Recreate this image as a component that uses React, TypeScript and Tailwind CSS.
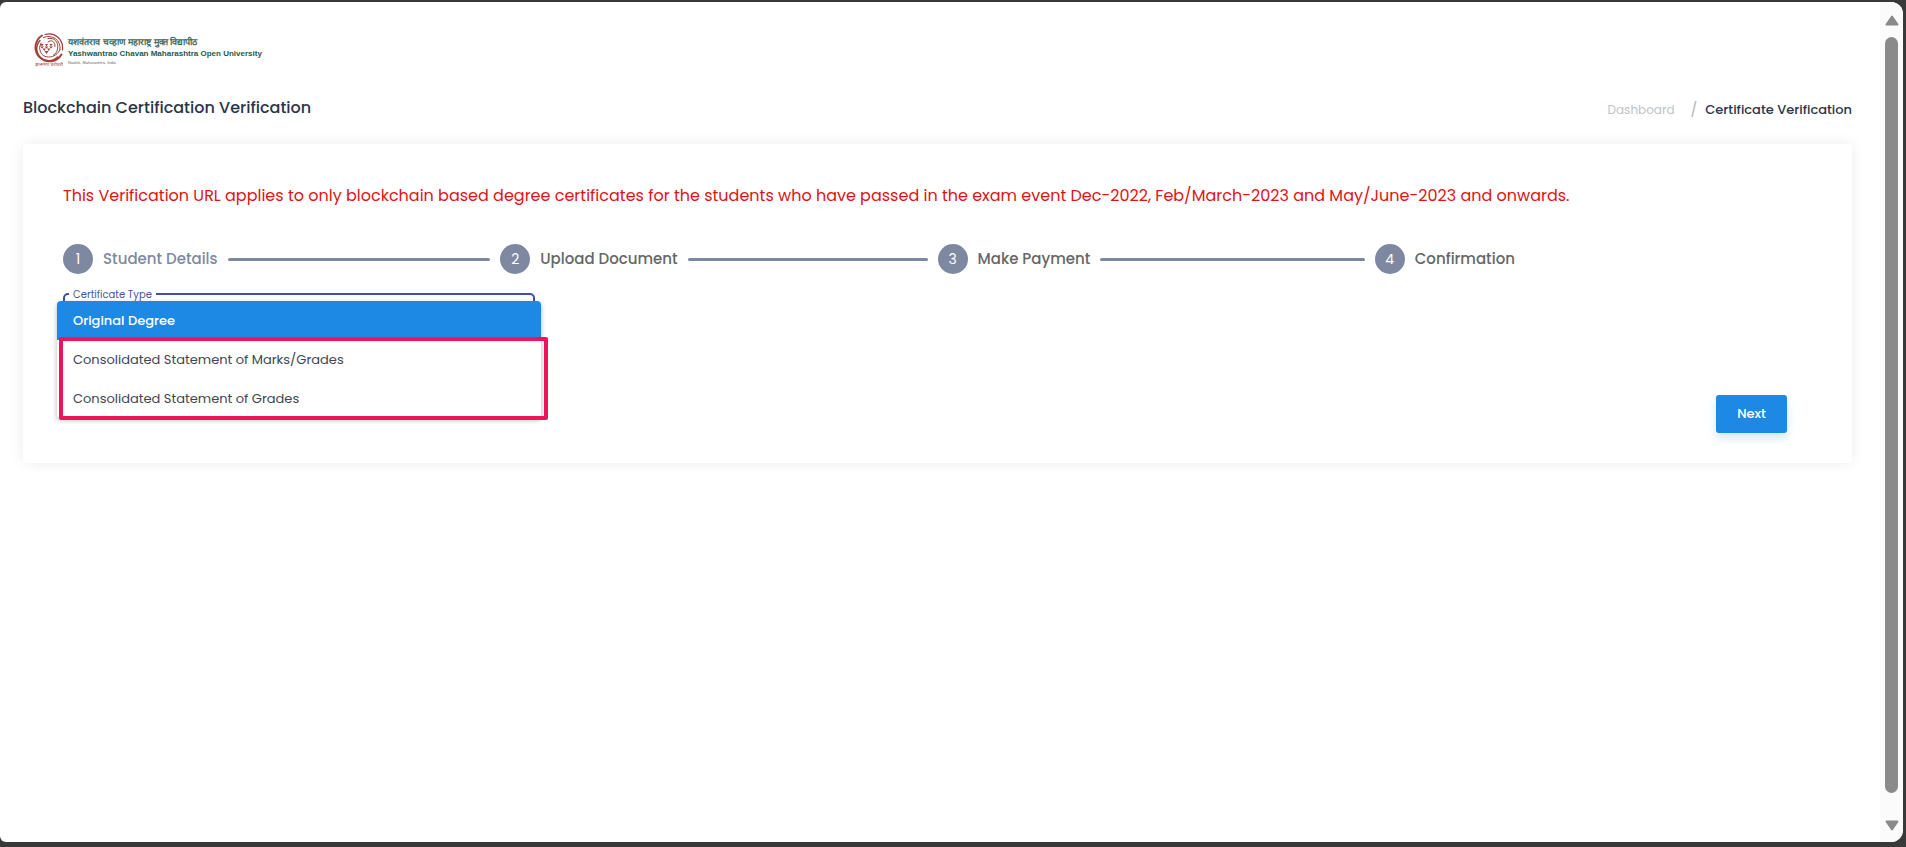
import { useState } from "react";

const steps = [
  "Student Details",
  "Upload Document",
  "Make Payment",
  "Confirmation",
];

const certificateTypes = [
  "Original Degree",
  "Consolidated Statement of Marks/Grades",
  "Consolidated Statement of Grades",
];

function Emblem() {
  return (
    <svg viewBox="0 0 60 60" className="h-[30px] w-[30px]" aria-hidden="true">
      <g fill="none" stroke="#a1423a" strokeLinecap="round">
        <path d="M16 5A28 28 0 1 0 55 43" strokeWidth="4" />
        <path d="M12 15A23 23 0 0 0 47 48" strokeWidth="3" />
        <path d="M14 20A18 18 0 0 0 29 48C40 48 48 42 52 33" strokeWidth="2" />
        <path d="M22 3C42 -2 59 12 57 34" strokeWidth="2.5" />
        <path d="M19 9C37 2 54 14 52 33" strokeWidth="2" />
        <path d="M28 11C40 8 50 18 47 32C46 38 43 42 39 44" strokeWidth="2" />
        <path d="M28 18C34 12 43 17 42 27" strokeWidth="2" />
      </g>
      <g fill="#a1423a">
        <path d="M13 22h6l-3 5zM22 22h6l-3 5zM31 22h6l-3 5z" />
        <path d="M12 27h8l-4 4zM21 27h8l-4 4zM30 27h8l-4 4z" />
        <path d="M17 31h7l-3.5 5zM26 31h7l-3.5 5zM21 36h8l-4 6z" />
      </g>
    </svg>
  );
}

function Logo() {
  return (
    <a href="#" className="flex gap-1 whitespace-nowrap">
      <span className="flex w-[30px] flex-col items-center">
        <Emblem />
        <span className="font-['Noto_Sans_Devanagari','Noto_Sans',sans-serif] text-[5px] leading-[5px] text-[#a1423a]">
          ज्ञानगंगा घरोघरी
        </span>
      </span>
      <span className="flex flex-col pt-1 font-['Liberation_Sans',Arial,sans-serif]">
        <span className="text-[9px] leading-[11px] font-semibold text-[#3f6b5c]">
          यशवंतराव चव्हाण महाराष्ट्र मुक्त विद्यापीठ
        </span>
        <span className="text-[8px] leading-[11px] font-bold text-[#1f5a48]">
          Yashwantrao Chavan Maharashtra Open University
        </span>
        <span className="text-[4px] leading-[7px] text-[#666]">
          Nashik, Maharashtra, India
        </span>
      </span>
    </a>
  );
}

function Stepper() {
  return (
    <ol className="grid grid-cols-4">
      {steps.map((step, index) => (
        <li key={step} className="flex items-center gap-2.5 pr-2.5">
          <span className="flex h-[30px] w-[30px] shrink-0 items-center justify-center rounded-full bg-[#7f88a1] text-sm text-white">
            {index + 1}
          </span>
          <span
            className={`text-[15px] font-medium whitespace-nowrap ${
              index === 0 ? "text-[#7f88a1]" : "text-[#666]"
            }`}
          >
            {step}
          </span>
          {index < steps.length - 1 && (
            <span className="h-[3px] flex-1 rounded-full bg-[#7f88a1]" />
          )}
        </li>
      ))}
    </ol>
  );
}

function CertificateTypeField() {
  const [selected, setSelected] = useState(certificateTypes[0]);

  return (
    <div className="relative w-[27%]">
      <div className="relative h-12 rounded-[5px] border-2 border-[#3f51a5]">
        <label
          htmlFor="certificateType"
          className="absolute -top-1.5 left-1 bg-white px-1 text-[10px] leading-3 text-[#4a549c]"
        >
          Certificate Type
        </label>
        <select
          id="certificateType"
          value={selected}
          onChange={(e) => setSelected(e.target.value)}
          className="h-full w-full appearance-none bg-transparent px-2 text-[13px] outline-none"
        >
          {certificateTypes.map((type) => (
            <option key={type}>{type}</option>
          ))}
        </select>
      </div>

      <div className="absolute -inset-x-1.5 top-2">
        <ul className="overflow-hidden rounded bg-white shadow-[0_2px_5px_rgba(0,0,0,0.3)]">
          {certificateTypes.map((type) => (
            <li key={type}>
              <button
                type="button"
                onClick={() => setSelected(type)}
                className={`block h-[39px] w-full px-4 text-left text-[13px] ${
                  type === selected
                    ? "bg-[#1e88e5] font-medium text-white"
                    : "bg-white text-[#3e4555]"
                }`}
              >
                {type}
              </button>
            </li>
          ))}
        </ul>
        {/* highlight around the other certificate types */}
        <div className="pointer-events-none absolute -right-[7px] -bottom-0.5 left-0.5 h-[83px] rounded-xs border-4 border-[#ee145b]" />
      </div>
    </div>
  );
}

function ScrollRail() {
  return (
    <div className="flex w-[23px] shrink-0 flex-col items-center bg-[#fbfbfb] pt-[13px] pb-[11px]">
      <svg viewBox="0 0 14 11" className="h-[11px] w-3.5" aria-hidden="true">
        <path
          d="M7 1.5 12.5 9.5H1.5Z"
          fill="#8a8a8a"
          stroke="#8a8a8a"
          strokeWidth="2"
          strokeLinejoin="round"
        />
      </svg>
      <span className="mt-[11px] mb-[27px] w-[13px] flex-1 rounded-full bg-[#8a8a8a]" />
      <svg viewBox="0 0 14 11" className="h-[11px] w-3.5" aria-hidden="true">
        <path
          d="M7 9.5 12.5 1.5H1.5Z"
          fill="#8a8a8a"
          stroke="#8a8a8a"
          strokeWidth="2"
          strokeLinejoin="round"
        />
      </svg>
    </div>
  );
}

export default function App() {
  return (
    <div className="flex h-screen bg-[#3a3939] pt-0.5 pr-[3px] pb-[5px] font-[Poppins,Inter,sans-serif]">
      <div className="flex flex-1 overflow-hidden rounded-l-md rounded-r-xl bg-white">
        <div className="flex-1 pr-7 pl-[23px]">
          <header className="pt-[31px] pl-[11px]">
            <Logo />
          </header>

          <div className="flex items-center justify-between pt-7">
            <h1 className="text-base leading-6 font-medium text-[#2c3448]">
              Blockchain Certification Verification
            </h1>
            <nav className="flex items-center gap-2 pt-1 text-[13px] leading-5">
              <a href="#" className="mr-2 text-xs leading-5 text-[#bfc2ca]">
                Dashboard
              </a>
              <span className="text-sm leading-5 text-[#b0b3ba]">/</span>
              <span className="font-medium text-[#2c3448]">
                Certificate Verification
              </span>
            </nav>
          </div>

          <main className="mt-6 rounded-sm bg-white px-10 pt-10 pb-[30px] shadow-[0_0_14px_rgba(0,0,0,0.08)]">
            <p className="text-base leading-6 text-[#dd1414]">
              This Verification URL applies to only blockchain based degree
              certificates for the students who have passed in the exam event
              Dec-2022, Feb/March-2023 and May/June-2023 and onwards.
            </p>
            <div className="mt-9">
              <Stepper />
            </div>
            <div className="mt-[19px]">
              <CertificateTypeField />
            </div>
            <div className="mt-[54px] flex justify-end pr-[25px]">
              <button
                type="button"
                className="h-[38px] w-[71px] rounded-[3px] bg-[#1e88e5] text-[13px] font-medium text-white shadow-[0_5px_10px_rgba(30,136,229,0.2)]"
              >
                Next
              </button>
            </div>
          </main>
        </div>
        <ScrollRail />
      </div>
    </div>
  );
}
